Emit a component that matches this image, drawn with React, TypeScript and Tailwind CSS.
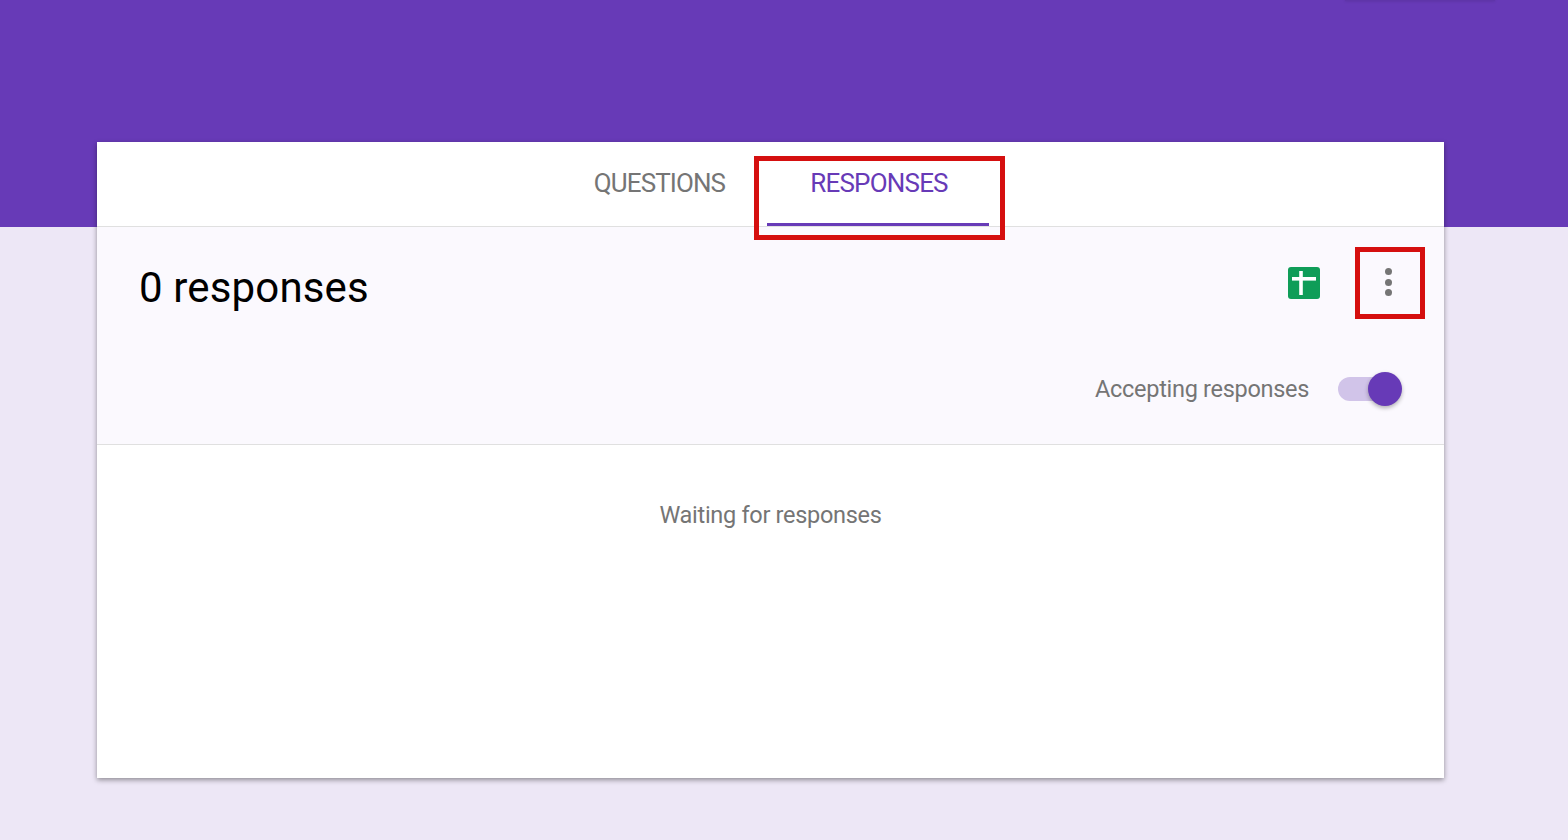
import React from 'react';

const SheetsIcon = () => (
  <svg width="32" height="32" viewBox="0 0 32 32" className="block">
    <rect width="32" height="32" rx="3" fill="#0f9d58" />
    <rect x="4" y="10" width="24" height="3.6" fill="#fff" />
    <rect x="11.2" y="4" width="3.6" height="24" fill="#fff" />
  </svg>
);

const Toggle = () => (
  <div className="relative h-6 w-[52px] rounded-full bg-[#d1c4e9]">
    <div className="absolute left-[30px] top-[-5px] h-[34px] w-[34px] rounded-full bg-[#673ab7] shadow-[0_2px_4px_rgba(0,0,0,0.3)]" />
  </div>
);

export default function App() {
  return (
    <div className="relative h-[840px] overflow-hidden bg-[#ede7f6] font-['Roboto',sans-serif]">
      <div className="relative h-[227px] bg-[#673ab7]">
        <div className="absolute right-[73px] top-0 h-px w-[150px] bg-[#5f35a9] shadow-[0_0_3px_rgba(0,0,0,0.25)]" />
      </div>

      <div className="relative ml-[97px] mt-[-85px] flex h-[636px] w-[1347px] flex-col bg-white shadow-[0_2px_5px_rgba(0,0,0,0.4)]">
        <div className="flex h-[85px] shrink-0 justify-center border-b border-[#e0e0e0] pr-[5px]">
          <div className="flex w-[220px] items-start justify-center pl-[5px] pt-[24px] text-[26px] leading-[34px] tracking-[-0.9px] text-[#757575]">
            QUESTIONS
          </div>
          <div className="relative flex w-[222px] items-start justify-center border-b-[3px] border-[#673ab7] pl-[2px] pt-[24px] text-[26px] leading-[34px] tracking-[-0.8px] text-[#673ab7]">
            RESPONSES
            <div className="absolute bottom-[-17px] left-[-13px] right-[-16px] top-[14px] border-[5px] border-[#d50f0f]" />
          </div>
        </div>

        <div className="h-[218px] shrink-0 border-b border-[#e0e0e0] bg-[#fbf9fe] pl-[42px] pr-[44px]">
          <div className="flex items-start justify-between">
            <div className="pt-[35px] text-[42px] leading-[52px] tracking-[0.15px] text-black">0 responses</div>
            <div className="flex items-center pt-[40px]">
              <SheetsIcon />
              <div className="relative ml-[65px] mr-[8px] flex h-8 w-[7px] flex-col items-center justify-center gap-[3.5px] pb-[2px]">
                <span className="block h-[7px] w-[7px] shrink-0 rounded-full bg-[#757575]" />
                <span className="block h-[7px] w-[7px] shrink-0 rounded-full bg-[#757575]" />
                <span className="block h-[7px] w-[7px] shrink-0 rounded-full bg-[#757575]" />
                <div className="absolute left-[-30px] top-[-20px] h-[72px] w-[70px] border-[5px] border-[#d50f0f]" />
              </div>
            </div>
          </div>
          <div className="mt-[59px] flex items-center justify-end pr-[10px]">
            <span className="text-[23.5px] leading-[32px] tracking-[-0.3px] text-[#757575]">Accepting responses</span>
            <div className="ml-[29px]">
              <Toggle />
            </div>
          </div>
        </div>

        <div className="flex justify-center pt-[54px] text-[23.5px] leading-[32px] tracking-[-0.3px] text-[#757575]">
          Waiting for responses
        </div>
      </div>
    </div>
  );
}
